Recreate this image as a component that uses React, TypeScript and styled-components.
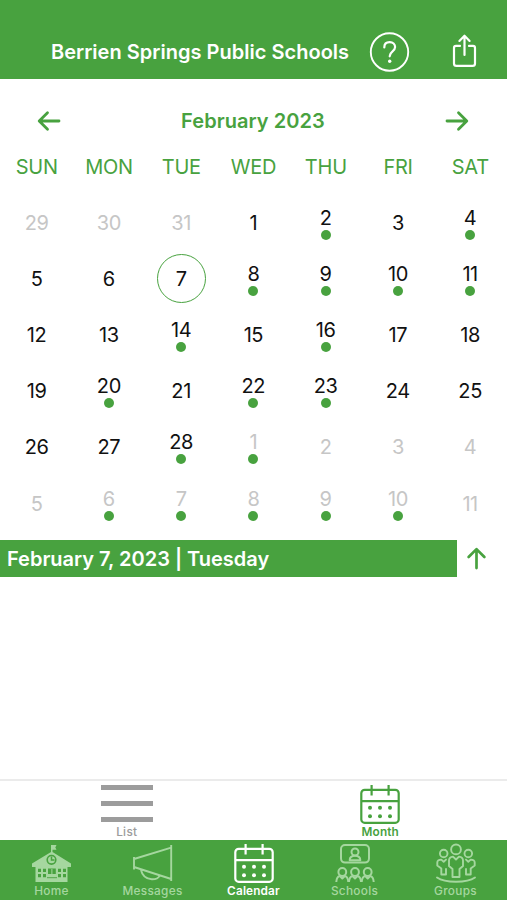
import React from "react";
import styled, { createGlobalStyle } from "styled-components";

const GREEN = "#48a23f";
const PALE = "#a5d79f";

const GlobalStyle = createGlobalStyle`
  * { box-sizing: border-box; }
  body { margin: 0; background: #fff; }
  svg { display: block; flex: none; }
`;

const Screen = styled.div`
  width: 507px;
  height: 900px;
  display: flex;
  flex-direction: column;
  overflow: hidden;
  background: #fff;
  color: #111;
  font-family: Inter, "Liberation Sans", sans-serif;
`;

const Header = styled.header`
  height: 79px;
  flex: none;
  display: flex;
  align-items: center;
  padding: 25px 29px 0 51px;
  background: ${GREEN};
  color: #fff;
`;

const Title = styled.h1`
  margin: 0;
  width: 318px;
  font-size: 20px;
  font-weight: 600;
  letter-spacing: 0.02px;
  line-height: 25px;
  white-space: nowrap;
`;

const HeaderActions = styled.div`
  display: flex;
  align-items: center;
  gap: 42px;
`;

const MonthBar = styled.div`
  height: 84px;
  flex: none;
  display: flex;
  align-items: center;
  justify-content: space-between;
  padding: 0 37px 0 36px;
  color: ${GREEN};
`;

const MonthName = styled.h2`
  margin: 0;
  font-size: 20px;
  font-weight: 600;
  letter-spacing: 0.06px;
  line-height: 24px;
`;

const Week = styled.div<{ $height: number }>`
  display: grid;
  grid-template-columns: repeat(7, 72.25px);
  height: ${(p) => p.$height}px;
  padding-left: 0.5px;
  align-items: center;
  justify-items: center;
  flex: none;
`;

const Weekdays = styled(Week)`
  margin-top: -11px;
  margin-bottom: 13.5px;
  padding-left: 0.7px;
  color: ${GREEN};
  font-size: 20px;
  letter-spacing: -0.25px;
`;

const Day = styled.div<{ $muted: boolean; $selected: boolean }>`
  width: 49px;
  height: 49px;
  display: flex;
  flex-direction: column;
  align-items: center;
  justify-content: center;
  border: 1.5px solid ${(p) => (p.$selected ? GREEN : "transparent")};
  border-radius: 50%;
  color: ${(p) => (p.$muted ? "#c6c6c6" : "#111")};
  font-size: 20px;
  line-height: 24px;
  letter-spacing: -0.4px;
`;

const EventDot = styled.span`
  width: 10px;
  height: 10px;
  border-radius: 50%;
  background: ${GREEN};
`;

const DateRow = styled.div`
  height: 37px;
  margin-top: 8.5px;
  flex: none;
  display: flex;
  align-items: center;
  color: ${GREEN};
`;

const DateLabel = styled.div`
  width: 456.5px;
  height: 37px;
  padding-left: 7px;
  margin-right: 7px;
  background: ${GREEN};
  color: #fff;
  font-size: 20px;
  font-weight: 600;
  letter-spacing: -0.01px;
  line-height: 38px;
`;

const Events = styled.main`
  flex: 1;
`;

const ViewTabs = styled.nav`
  height: 61px;
  flex: none;
  display: grid;
  grid-template-columns: 1fr 1fr;
  border-top: 2px solid #ebebeb;
`;

const BottomTabs = styled.nav`
  height: 60px;
  flex: none;
  display: grid;
  grid-template-columns: repeat(5, 101px);
  padding-left: 1px;
  background: ${GREEN};
`;

const Tab = styled.div<{ $color: string; $bold?: boolean }>`
  display: flex;
  flex-direction: column;
  align-items: center;
  padding-top: 3px;
  color: ${(p) => p.$color};
  font-size: 11.8px;
  font-weight: ${(p) => (p.$bold ? 600 : 500)};
  letter-spacing: ${(p) => (p.$bold ? 0.15 : 0.3)}px;
  line-height: 14px;
`;

const ListBars = styled.span`
  width: 52px;
  height: 41px;
  padding: 1px 0 3px;
  display: flex;
  flex-direction: column;
  justify-content: space-between;
`;

const ListBar = styled.i`
  height: 5px;
  background: #9c9c9c;
`;

function Arrow({ turn, size = 26 }: { turn: number; size?: number }) {
  return (
    <svg width={size} height={size} viewBox="0 0 26 26" fill="none" stroke="currentColor" strokeWidth="2.8" strokeLinecap="round" strokeLinejoin="round">
      <path transform={`rotate(${turn} 13 13)`} d="M3 13H22.5M14.5 4.8L22.8 13L14.5 21.2" />
    </svg>
  );
}

function HelpIcon() {
  return (
    <svg width="41" height="42" viewBox="0 0 41 42" fill="none" stroke="currentColor" strokeLinecap="round">
      <circle cx="20.5" cy="21" r="18.7" strokeWidth="1.9" />
      <path d="M15.3 16.4C15.3 13 17.5 11.1 20.7 11.1S26.1 13.1 26.1 16C26.1 20.6 20.7 20 20.7 25.3" strokeWidth="2.2" />
      <circle cx="20.7" cy="30.3" r="1.7" fill="currentColor" stroke="none" />
    </svg>
  );
}

function ShareIcon() {
  return (
    <svg width="25" height="36" viewBox="0 1.6 25 36" fill="none" stroke="currentColor" strokeWidth="2.2" strokeLinecap="round" strokeLinejoin="round">
      <path d="M8 13.5H4Q2 13.5 2 15.5V31Q2 33.4 4.4 33.4H20.6Q23 33.4 23 31V15.5Q23 13.5 21 13.5H17M12.5 22.5V3.5M7.4 8.5L12.5 3.3L17.6 8.5" />
    </svg>
  );
}

function CalendarIcon() {
  return (
    <svg width="42" height="41" viewBox="0 0 42 41" fill="none" stroke="currentColor" strokeWidth="2.2">
      <rect x="2.3" y="5.8" width="37.4" height="33" rx="3.4" />
      <path d="M2.3 17.2H39.7M12.6 1V11.5M29.6 1V11.5" />
      <g fill="currentColor" stroke="none">
        {[11, 21, 31].map((x) => [23.7, 32.2].map((y) => <circle key={`${x}-${y}`} cx={x} cy={y} r="2" />))}
      </g>
    </svg>
  );
}

function HomeIcon() {
  return (
    <svg width="42" height="41" viewBox="0 0 42 41" fill="currentColor">
      <path d="M20 10V2H25.5L24.3 4.4L25.5 6.7H21.5V9L40 20.5V24H36.5V39H4.5V24H1V20.5L20 9Z" />
      <g fill={GREEN}>
        <path d="M7 25.8h3v3.2H7zM12 25.8h3v3.2h-3zM7 31h3v3.2H7zM12 31h3v3.2h-3zM27 25.8h3v3.2h-3zM32 25.8h3v3.2h-3zM27 31h3v3.2h-3zM32 31h3v3.2h-3zM17 25.5h7.8V31H17z" />
      </g>
      <circle cx="20.5" cy="16.8" r="4.3" fill="none" stroke={GREEN} strokeWidth="1.6" />
      <path d="M20.5 13.5V17H23.5" fill="none" stroke={GREEN} strokeWidth="1.5" />
      <path d="M20.9 26V31" stroke="currentColor" strokeWidth="1" />
      <path d="M16 34.7H26" stroke={GREEN} strokeWidth="0.9" />
    </svg>
  );
}

function MegaphoneIcon() {
  return (
    <svg width="42" height="41" viewBox="0 0 42 41" fill="none" stroke="currentColor" strokeWidth="1.9" strokeLinejoin="round">
      <path d="M39.2 2V38M2 14V26.5M2 16L39.2 4.6M2 24L39.2 36M8.8 26.5Q11 35.9 19.8 36.3Q25.6 36.5 27.8 32.6" />
    </svg>
  );
}

function SchoolsIcon() {
  return (
    <svg width="42" height="41" viewBox="0 0 42 41" fill="none" stroke="currentColor" strokeWidth="2" strokeLinejoin="round">
      <rect x="7" y="2" width="28" height="17.6" rx="4" />
      <circle cx="21" cy="8.9" r="3.5" />
      <path d="M15.7 17.3Q15.7 12.8 21 12.8T26.3 17.3Z" />
      {[8.3, 21, 33.7].map((x) => (
        <g key={x}>
          <circle cx={x} cy="29" r="3.9" />
          <path d={`M${x - 6} 39Q${x - 5.7} 33.8 ${x - 2.5} 33L${x} 35.5L${x + 2.5} 33Q${x + 5.7} 33.8 ${x + 6} 39`} />
        </g>
      ))}
    </svg>
  );
}

function GroupsIcon() {
  return (
    <svg width="42" height="41" viewBox="0 0 42 41" fill="none" stroke="currentColor" strokeWidth="1.9" strokeLinecap="round" strokeLinejoin="round">
      <circle cx="21" cy="6.4" r="4.9" />
      <circle cx="8.7" cy="10.5" r="3.8" />
      <circle cx="33.3" cy="10.5" r="3.8" />
      <path d="M17.5 34V26L14 23V17.5Q14 14 18 13.6L21 16.5L24 13.6Q28 14 28 17.5V23L24.5 26V34Z" />
      <path d="M11 31.5H6.3V25.5L2.3 22.5V19.5Q2.3 16.6 6.3 16.6L8.7 18.7L11 16.6M11 31.5V26M31 31.5H35.7V25.5L39.7 22.5V19.5Q39.7 16.6 35.7 16.6L33.3 18.7L31 16.6M31 31.5V26" />
      <path d="M2 34.5Q8 38.8 21 38.8T40 34.5" />
    </svg>
  );
}

const weekdayNames = ["SUN", "MON", "TUE", "WED", "THU", "FRI", "SAT"];
const firstCell = new Date(2023, 0, 29);
const eventCells = new Set([4, 6, 10, 11, 12, 13, 16, 18, 22, 24, 25, 30, 31, 36, 37, 38, 39, 40]);

const cells = Array.from({ length: 42 }, (_, index) => {
  const date = new Date(firstCell.getFullYear(), firstCell.getMonth(), firstCell.getDate() + index);
  return {
    index,
    day: date.getDate(),
    muted: date.getMonth() !== 1,
    selected: index === 9,
    hasEvent: eventCells.has(index),
  };
});

const bottomTabs = [
  { label: "Home", Icon: HomeIcon },
  { label: "Messages", Icon: MegaphoneIcon },
  { label: "Calendar", Icon: CalendarIcon },
  { label: "Schools", Icon: SchoolsIcon },
  { label: "Groups", Icon: GroupsIcon },
];

export default function App() {
  return (
    <Screen>
      <GlobalStyle />
      <Header>
        <Title>Berrien Springs Public Schools</Title>
        <HeaderActions>
          <HelpIcon />
          <ShareIcon />
        </HeaderActions>
      </Header>

      <MonthBar>
        <Arrow turn={180} />
        <MonthName>February 2023</MonthName>
        <Arrow turn={0} />
      </MonthBar>

      <Weekdays $height={29}>
        {weekdayNames.map((name) => (
          <span key={name}>{name}</span>
        ))}
      </Weekdays>
      {[0, 1, 2, 3, 4, 5].map((week) => (
        <Week key={week} $height={56.2}>
          {cells.slice(week * 7, week * 7 + 7).map((cell) => (
            <Day key={cell.index} $muted={cell.muted} $selected={cell.selected}>
              {cell.day}
              {cell.hasEvent && <EventDot />}
            </Day>
          ))}
        </Week>
      ))}

      <DateRow>
        <DateLabel>February 7, 2023 | Tuesday</DateLabel>
        <Arrow turn={-90} size={25} />
      </DateRow>
      <Events />

      <ViewTabs>
        <Tab $color="#9c9c9c">
          <ListBars>
            <ListBar />
            <ListBar />
            <ListBar />
          </ListBars>
          List
        </Tab>
        <Tab $color={GREEN} $bold>
          <CalendarIcon />
          Month
        </Tab>
      </ViewTabs>
      <BottomTabs>
        {bottomTabs.map(({ label, Icon }) => {
          const active = label === "Calendar";
          return (
            <Tab key={label} $color={active ? "#fff" : PALE} $bold={active}>
              <Icon />
              {label}
            </Tab>
          );
        })}
      </BottomTabs>
    </Screen>
  );
}
